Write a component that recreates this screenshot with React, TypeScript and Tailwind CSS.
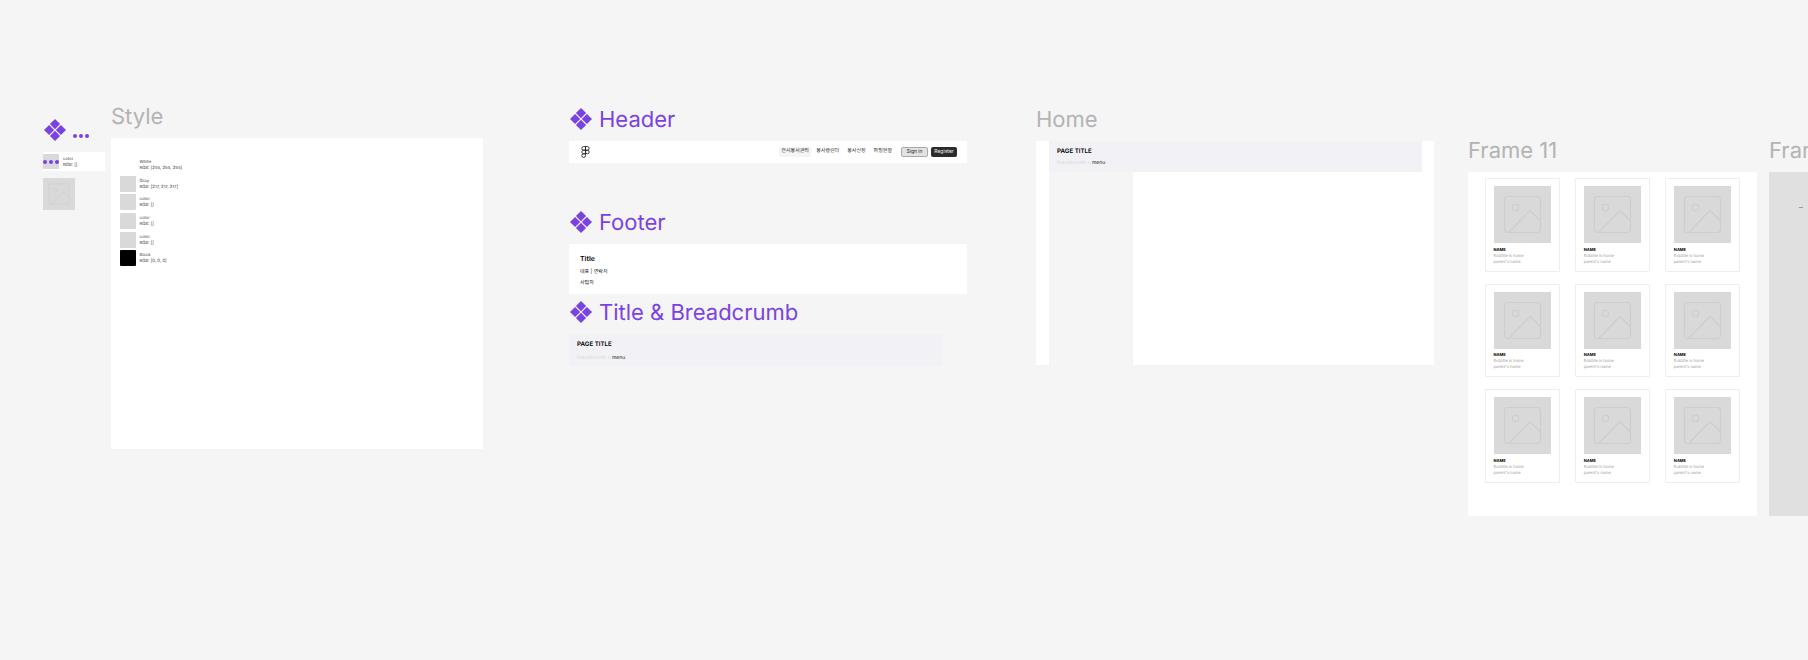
import type { ReactNode } from "react";

function Diamond({ className }: { className: string }) {
  return (
    <svg viewBox="0 0 22 22" className={className} fill="#7b42e2">
      <path d="M11 0l5.100 5.100L11 10.200 5.900 5.100z" />
      <path d="M5.100 5.900L10.200 11l-5.100 5.100L0 11z" />
      <path d="M16.900 5.900L22 11l-5.100 5.100L11.800 11z" />
      <path d="M11 11.800l5.100 5.100L11 22l-5.100-5.100z" />
    </svg>
  );
}

function Dots() {
  return (
    <div className="flex gap-[2px]">
      <span className="w-[4px] h-[4px] rounded-full bg-[#7b42e2]" />
      <span className="w-[4px] h-[4px] rounded-full bg-[#7b42e2]" />
      <span className="w-[4px] h-[4px] rounded-full bg-[#7b42e2]" />
    </div>
  );
}

function ImagePlaceholder({ className }: { className: string }) {
  return (
    <div className={`bg-[#d9d9d9] ${className}`}>
      <svg viewBox="0 0 57 57" className="w-full h-full" fill="none" stroke="#cdcdcd" strokeWidth="1.1">
        <rect x="10.5" y="10.5" width="36" height="36" rx="3.5" />
        <circle cx="21.5" cy="21.5" r="3.2" />
        <path d="M15 46L36 24.5L46.5 35" />
      </svg>
    </div>
  );
}

function FrameLabel({ children }: { children: ReactNode }) {
  return <div className="text-[22px] leading-[29px] whitespace-nowrap text-[#b3b3b3]">{children}</div>;
}

function ComponentLabel({ children }: { children: ReactNode }) {
  return (
    <div className="h-[29px] flex items-center gap-[7px] pl-[1px] whitespace-nowrap text-[#7b42e2] text-[22px] leading-[29px]">
      <Diamond className="w-[22px] h-[22px]" />
      <span className="pt-[4px]">{children}</span>
    </div>
  );
}

const swatches = [
  { name: "White", rgb: "RGB: [255, 255, 255]", color: "bg-white" },
  { name: "Gray", rgb: "RGB: [217, 217, 217]", color: "bg-[#d9d9d9]" },
  { name: "color", rgb: "RGB: []", color: "bg-[#d9d9d9]" },
  { name: "color", rgb: "RGB: []", color: "bg-[#d9d9d9]" },
  { name: "color", rgb: "RGB: []", color: "bg-[#d9d9d9]" },
  { name: "Black", rgb: "RGB: [0, 0, 0]", color: "bg-black" },
];

function SwatchText({ name, rgb }: { name: string; rgb: string }) {
  return (
    <div className="flex flex-col pt-[2px] text-[4.3px] leading-[6px] text-[#333333]">
      <span>{name}</span>
      <span>{rgb}</span>
    </div>
  );
}

function Breadcrumb({ className, menuGap }: { className: string; menuGap: string }) {
  return (
    <div className={`bg-[#f1f1f6] pl-[8px] pt-[6.5px] ${className}`}>
      <div className="text-[6.2px] leading-[8px] font-semibold text-black">PAGE TITLE</div>
      <div className={`text-[5px] leading-[6px] text-[#d9d9d9] ${menuGap}`}>
        breadcrumb &gt; <span className="text-[#222222]">menu</span>
      </div>
    </div>
  );
}

function Card() {
  return (
    <div className="h-[93.5px] rounded-[1px] border border-[#eeeeee] pl-[7.5px] pt-[7px]">
      <ImagePlaceholder className="w-[57px] h-[57px]" />
      <div className="mt-[3.5px] text-[4px] leading-[6px] font-bold text-black">NAME</div>
      <div className="text-[4px] leading-[6px] text-[#999999]">Subtitle is home</div>
      <div className="text-[4px] leading-[6px] text-[#999999]">parent's name</div>
    </div>
  );
}

const navItems = ["봉사캘린더", "봉사신청", "파일현황"];

export default function App() {
  return (
    <div
      className="relative w-[1808px] h-[660px] overflow-hidden bg-[#f5f5f5] [text-rendering:geometricPrecision]"
      style={{ fontFamily: '"Inter", "Noto Sans CJK KR", sans-serif' }}
    >
      {/* Component set on the far left */}
      <div className="absolute left-[43px] top-[119px] flex flex-col">
        <div className="flex items-end pl-[1px]">
          <Diamond className="w-[22px] h-[22px]" />
          <div className="ml-[7px] mb-[3px]">
            <Dots />
          </div>
        </div>
        <div className="mt-[11px] w-[62px] h-[19px] bg-white flex items-center gap-[4px]">
          <div className="relative w-[16px] h-[15.5px] rounded-[1px] bg-[#d9d9d9] flex items-center justify-center">
            <Dots />
          </div>
          <SwatchText name="color" rgb="RGB: []" />
        </div>
        <ImagePlaceholder className="mt-[7px] w-[32px] h-[32px]" />
      </div>

      {/* Style */}
      <div className="absolute left-[111px] top-[103px] flex flex-col gap-[6px]">
        <FrameLabel>Style</FrameLabel>
        <div className="w-[372px] h-[311px] bg-white pl-[8.5px] pt-[19px] flex flex-col gap-[2.7px]">
          {swatches.map((s, i) => (
            <div key={i} className="flex items-center gap-[4px] h-[16px]">
              <div className={`w-[16px] h-[16px] rounded-[1px] ${s.color}`} />
              <SwatchText name={s.name} rgb={s.rgb} />
            </div>
          ))}
        </div>
      </div>

      {/* Header, Footer, Title & Breadcrumb */}
      <div className="absolute left-[569px] top-[104px] w-[398px] flex flex-col">
        <ComponentLabel>Header</ComponentLabel>
        <div className="mt-[8px] h-[22px] bg-white flex items-center pl-[12px] pr-[10px]">
          <svg viewBox="0 0 8 11.500" className="w-[9px] h-[12px]" fill="none" stroke="#1e1e1e" strokeWidth="0.8">
            <path d="M4 .5H2.250a1.750 1.750 0 000 3.500H4z" />
            <path d="M4 .5h1.750a1.750 1.750 0 010 3.500H4z" />
            <path d="M4 4H2.250a1.750 1.750 0 000 3.500H4z" />
            <circle cx="5.750" cy="5.750" r="1.750" />
            <path d="M4 7.500H2.250A1.750 1.750 0 104 9.250z" />
          </svg>
          <div className="ml-auto flex items-center text-[5px] text-[#1e1e1e]">
            <div className="w-[32px] h-[10px] mr-[5px] rounded-[1.5px] bg-[#f5f5f5] flex items-center justify-center whitespace-nowrap">전시봉사관리</div>
            <div className="flex items-center gap-[8px]">
              {navItems.map((n) => (
                <span key={n}>{n}</span>
              ))}
            </div>
            <button className="ml-[9px] w-[27px] h-[10px] rounded-[2px] border border-[#a8a8a8] bg-[#e3e3e3] flex items-center justify-center">Sign in</button>
            <button className="ml-[3px] w-[26px] h-[10px] rounded-[2px] bg-[#2c2c2c] text-[#f5f5f5] flex items-center justify-center">Register</button>
          </div>
        </div>

        <div className="mt-[44px]">
          <ComponentLabel>Footer</ComponentLabel>
        </div>
        <div className="mt-[8px] h-[50px] bg-white pl-[11px] pt-[10px] text-[#222222]">
          <div className="text-[7px] leading-[9px] font-semibold text-black">Title</div>
          <div className="mt-[6px] text-[5px] leading-[6px]">대표 | 연락처</div>
          <div className="mt-[5px] text-[5px] leading-[6px]">사업자</div>
        </div>

        <div className="mt-[3px]">
          <ComponentLabel>Title &amp; Breadcrumb</ComponentLabel>
        </div>
        <Breadcrumb className="mt-[8px] w-[373px] h-[32px]" menuGap="mt-[6px]" />
      </div>

      {/* Home */}
      <div className="absolute left-[1036px] top-[106px] flex flex-col gap-[6px]">
        <FrameLabel>Home</FrameLabel>
        <div className="w-[398px] h-[224px] bg-white flex flex-col pl-[13px] pr-[12px]">
          <Breadcrumb className="w-[373px] h-[31px] shrink-0" menuGap="mt-[4.5px]" />
          <div className="w-[84px] flex-1 bg-[#f5f5f5]" />
        </div>
      </div>

      {/* Frame 11 */}
      <div className="absolute left-[1468px] top-[137px] flex flex-col gap-[6px]">
        <FrameLabel>Frame 11</FrameLabel>
        <div className="w-[289px] h-[344px] bg-white px-[17px] pt-[6px]">
          <div className="grid grid-cols-3 gap-x-[15.5px] gap-y-[12px]">
            {Array.from({ length: 9 }).map((_, i) => (
              <Card key={i} />
            ))}
          </div>
        </div>
      </div>

      {/* Frame running off the right edge */}
      <div className="absolute left-[1769px] top-[137px] flex flex-col gap-[6px]">
        <FrameLabel>Frame 12</FrameLabel>
        <div className="w-[289px] h-[344px] bg-[#e0e0e0] pl-[30px] pt-[33px] text-[4px] leading-[6px] text-black">—</div>
      </div>
    </div>
  );
}
